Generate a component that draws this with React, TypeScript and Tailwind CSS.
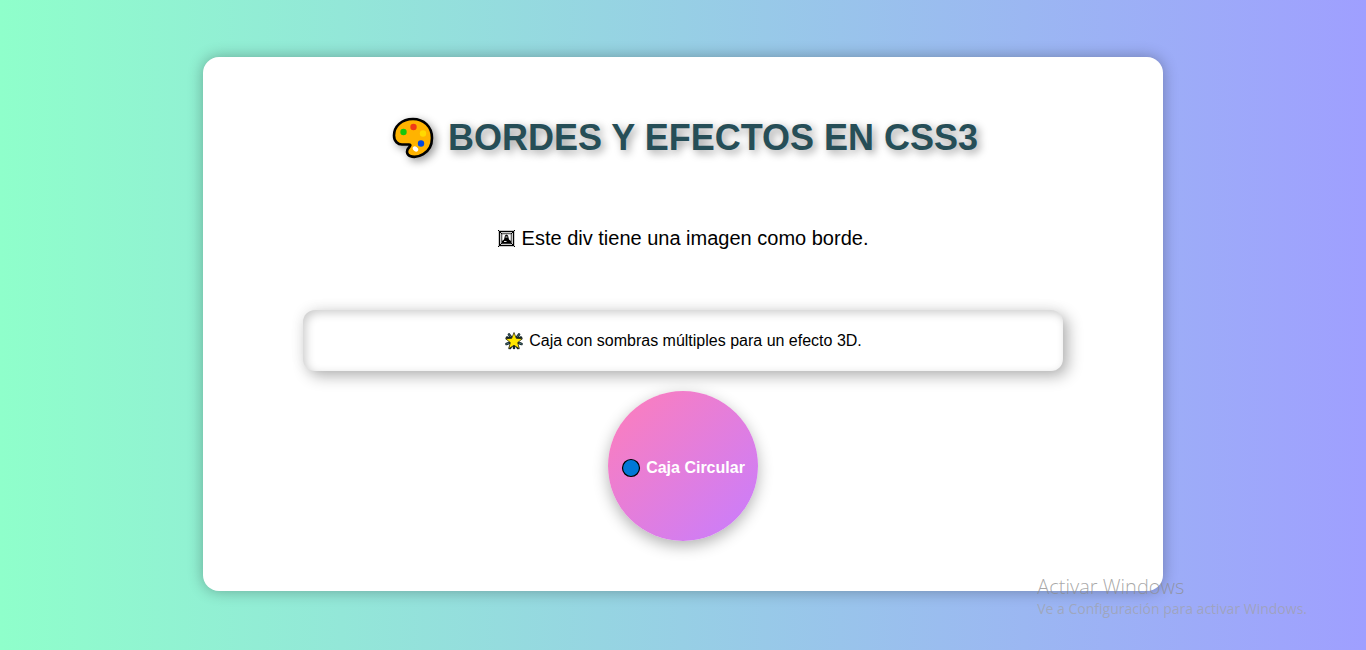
function Palette() {
  return (
    <svg viewBox="0 0 42 42" className="h-[42px] w-[42px] shrink-0 drop-shadow-[3px_3px_4px_rgba(0,0,0,0.4)]" aria-hidden="true">
      <path
        d="M21 2C9.500 2 2 9.500 2 18.500C2 24.500 6 27.500 10 27.500H17C19 27.500 18.500 29 17 30.500C14 33.500 14.500 37.500 18 39C24 41.500 40 37.500 40 21C40 9.500 31.500 2 21 2Z"
        fill="#ffb300"
        stroke="#000"
        strokeWidth="2.600"
      />
      <circle cx="11.500" cy="15" r="3.200" fill="#16c60c" />
      <circle cx="21.500" cy="10" r="3.200" fill="#f03a17" />
      <circle cx="31" cy="16.500" r="3.200" fill="#ffd900" />
      <circle cx="29" cy="26.500" r="3.200" fill="#0047e0" />
      <ellipse cx="23.500" cy="32" rx="3" ry="2.200" transform="rotate(40 23.500 32)" fill="#fff" />
    </svg>
  );
}

function Frame() {
  return (
    <svg viewBox="0 0 17 17" className="h-[17px] w-[17px] shrink-0" fill="none" stroke="#000" aria-hidden="true">
      <rect x="1.500" y="1.500" width="14" height="14" strokeWidth="1.400" />
      <rect x="3.800" y="3.800" width="9.400" height="9.400" strokeWidth="0.800" />
      <path d="M0 0L4 4M17 0L13 4M0 17L4 13M17 17L13 13" strokeWidth="1" />
      <path d="M4 13.500V11L6 9.500L7 5.500L8.500 4.500L10 5.500L11 9.500L13 11V13.500Z" fill="#000" stroke="none" />
      <path d="M7.500 7H9.500M6 11.500H8.500" stroke="#fff" strokeWidth="0.900" />
    </svg>
  );
}

function Star() {
  return (
    <svg viewBox="0 0 20 20" className="h-5 w-5 shrink-0" aria-hidden="true">
      <path
        d="M10 10L5 3.500M10 10L15 3.500M10 10L17.500 13M10 10L10 17M10 10L2.500 13M10 10L3 6.500M10 10L17 6.500M10 10L6 17M10 10L14 17"
        stroke="#14262a"
        strokeWidth="2.600"
        strokeLinecap="round"
      />
      <path
        d="M5 3.500L7 6M15 3.500L13 6M17.500 13L15 12M2.500 13L5 12"
        stroke="#4c7378"
        strokeWidth="1"
        strokeLinecap="round"
      />
      <path
        d="M10 1.500L12.300 7.300L18.500 7.700L13.700 11.600L15.300 17.700L10 14.300L4.700 17.700L6.300 11.600L1.500 7.700L7.700 7.300Z"
        fill="#ffe600"
        stroke="#111"
        strokeWidth="0.700"
      />
    </svg>
  );
}

export default function App() {
  return (
    <div className="relative min-h-screen bg-linear-to-r/srgb from-[#8fffcb] to-[#9f9fff] px-5 pt-[57px] pb-[59px] font-['Liberation_Sans',Arial,sans-serif] text-black">
      <main className="mx-auto flex max-w-[960px] flex-col items-center rounded-2xl bg-white px-5 pt-[60px] pb-[50px] shadow-[0_0_15px_rgba(0,0,0,0.3)] sm:px-[100px]">
        <h1 className="flex items-center justify-center gap-[14px] pl-1 text-4xl leading-10 font-bold text-[#264e57] [text-shadow:3px_3px_8px_rgba(0,0,0,0.4)]">
          <Palette />
          <span>BORDES Y EFECTOS EN CSS3</span>
        </h1>
        <p className="mt-[67px] flex items-center justify-center gap-[7px] text-xl leading-6">
          <Frame />
          <span>Este div tiene una imagen como borde.</span>
        </p>
        <section className="mt-[60px] flex w-full items-center justify-center gap-[5px] rounded-xl px-5 pt-[21px] pb-5 text-base leading-5 shadow-[5px_5px_15px_rgba(0,0,0,0.3),-2px_-2px_15px_rgba(0,0,0,0.04),inset_3px_3px_10px_rgba(0,0,0,0.2)]">
          <Star />
          <span>Caja con sombras múltiples para un efecto 3D.</span>
        </section>
        <section className="mt-5 flex size-[150px] items-center justify-center gap-[5px] rounded-full bg-linear-135/srgb from-[#ff7eb9] to-[#c77dff] pt-[3px] text-base leading-5 font-bold whitespace-nowrap text-white shadow-[0_5px_15px_rgba(0,0,0,0.3)]">
          <svg viewBox="0 0 20 20" className="size-5 shrink-0" aria-hidden="true">
            <circle cx="10" cy="10" r="8.500" fill="#0078d7" stroke="#000" strokeWidth="1.200" />
          </svg>
          <span>Caja Circular</span>
        </section>
      </main>
      <aside className="pointer-events-none absolute right-[59px] bottom-[31px] font-['Open_Sans','Noto_Sans',sans-serif] text-[#a0a0a0]/65">
        <p className="text-xl leading-6 font-light text-[#8c8c8c]/75">Activar Windows</p>
        <p className="text-sm leading-5">Ve a Configuración para activar Windows.</p>
      </aside>
    </div>
  );
}
